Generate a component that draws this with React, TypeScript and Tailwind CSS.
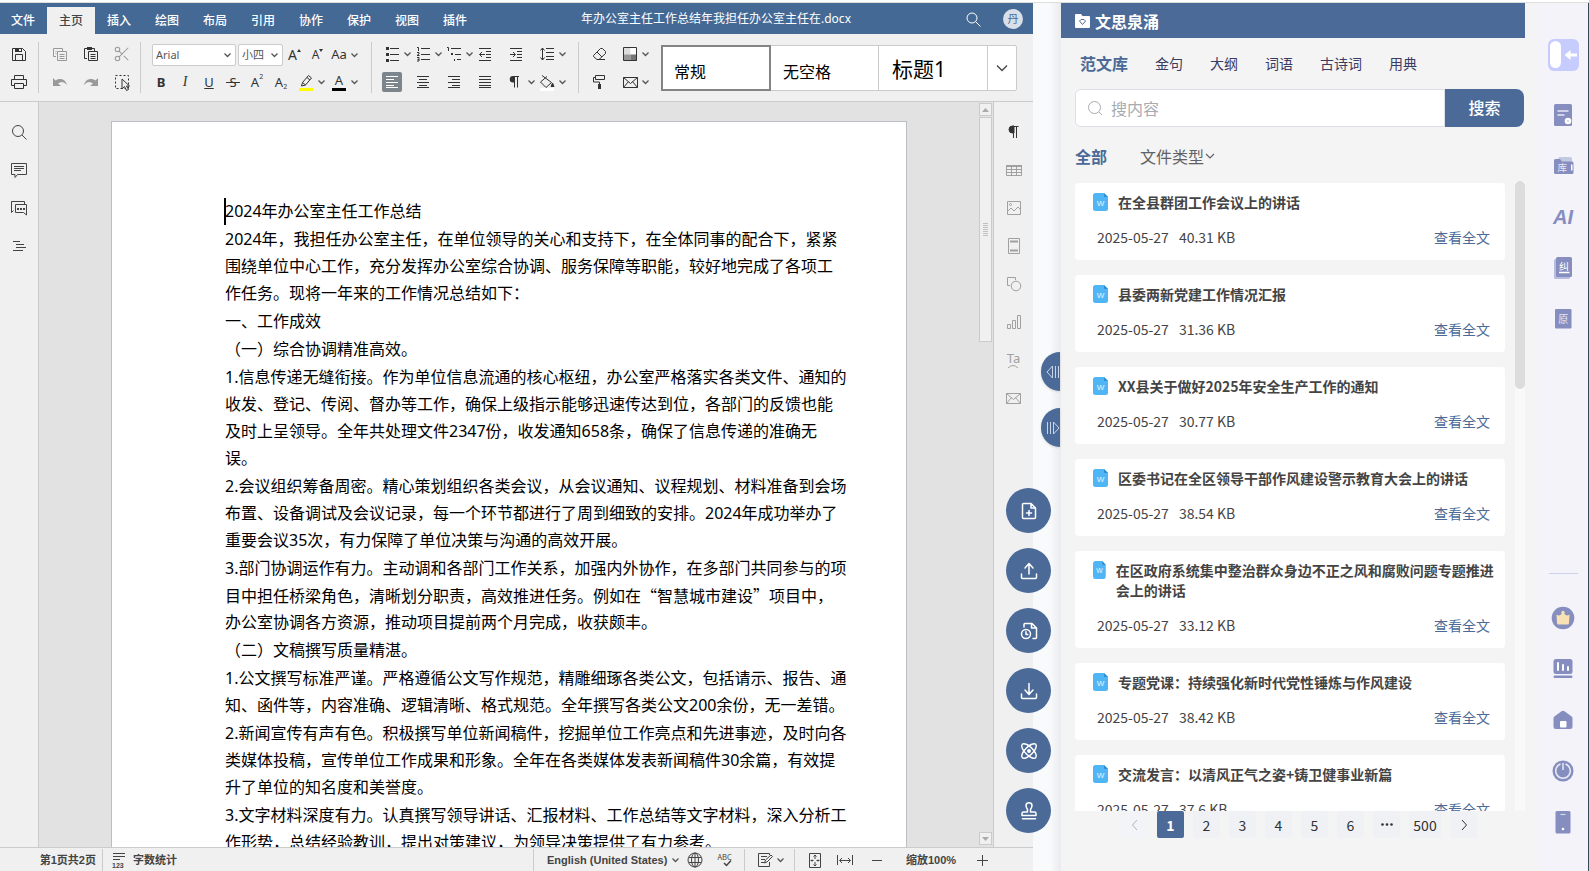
import React from "react";
import { Scissors } from "lucide-react";

type Kids = { children: React.ReactNode };

/* ---------- primitives ---------- */

function Ico({ children, s = 20, className = "" }: Kids & { s?: number; className?: string }) {
  return (
    <svg
      width={s}
      height={s}
      viewBox={`0 0 ${s} ${s}`}
      fill="none"
      stroke="currentColor"
      strokeWidth="1"
      className={`shrink-0 ${className}`}
      aria-hidden="true"
    >
      {children}
    </svg>
  );
}

function Chev({ className = "" }: { className?: string }) {
  return (
    <svg width="11" height="20" viewBox="0 0 11 20" fill="none" stroke="#555" strokeWidth="1.3" className={`shrink-0 ${className}`} aria-hidden="true">
      <path d="M2.5 8.5l3 3 3-3" />
    </svg>
  );
}

function Tool({
  label,
  w = "w-[31px]",
  menu = false,
  dim = false,
  active = false,
  children,
}: Kids & { label: string; w?: string; menu?: boolean; dim?: boolean; active?: boolean }) {
  return (
    <button type="button" aria-label={label} className={`flex h-5 items-center leading-none ${w} ${menu || active ? "justify-start" : "justify-center"} ${dim ? "text-[#999]" : "text-[#333]"}`}>
      {active ? <span className="flex size-5 items-center justify-center rounded-xs bg-[#7d858c] text-white">{children}</span> : children}
      {menu && <Chev />}
    </button>
  );
}

const Sep = () => <span className="h-[51px] w-px shrink-0 self-center bg-[#cbcbcb]" />;

const glyph = "font-['Noto_Sans','Noto_Sans_CJK_SC',sans-serif]";

function Lines({ rows }: { rows: [number, number, number][] }) {
  return (
    <Ico>
      {rows.map(([y, a, b]) => (
        <path key={y} d={`M${a} ${y + 0.5}H${b}`} />
      ))}
    </Ico>
  );
}

/* ---------- editor: header ---------- */

const menuTabs = ["文件", "主页", "插入", "绘图", "布局", "引用", "协作", "保护", "视图", "插件"];

function EditorHeader() {
  return (
    <header className="flex h-[31px] shrink-0 items-center bg-[#446995] pr-[10px] text-xs text-white">
      <nav className="flex h-full items-end">
        {menuTabs.map((t) => (
          <button
            key={t}
            type="button"
            className={`h-[27px] w-12 pb-[2px] font-medium ${t === "主页" ? "bg-[#f0f0f0] text-[#444]" : "text-white"} ${t === "文件" ? "-ml-px" : ""}`}
          >
            {t}
          </button>
        ))}
      </nav>
      <h1 className={`flex-1 pr-3 text-center ${glyph}`}>年办公室主任工作总结年我担任办公室主任在.docx</h1>
      <button type="button" aria-label="搜索" className="mr-[22px] text-white">
        <Ico s={16}>
          <circle cx="7" cy="7" r="5" />
          <path d="M10.5 10.5l5 5" />
        </Ico>
      </button>
      <button type="button" className="flex size-5 items-center justify-center rounded-full bg-[#d9dfe9] text-[11px] text-[#446995]">丹</button>
    </header>
  );
}

/* ---------- editor: ribbon ---------- */

function Combo({ label, options, w }: { label: string; options: string[]; w: string }) {
  return (
    <label className={`relative flex h-[22px] items-center rounded-xs border border-[#cbcbcb] bg-white ${w}`}>
      <span className="sr-only">{label}</span>
      <select className={`h-full w-full appearance-none bg-transparent pl-[3px] text-[11px] leading-4 text-[#555] outline-none ${glyph}`}>
        {options.map((o) => (
          <option key={o}>{o}</option>
        ))}
      </select>
      <Chev className="pointer-events-none absolute right-[2px]" />
    </label>
  );
}

function Ribbon() {
  return (
    <div className="flex h-[68px] shrink-0 border-b border-[#cbcbcb] bg-[#f0f0f0]">
      <div className="flex w-[38px] shrink-0 flex-col items-center gap-2 pt-[10px]">
        <Tool label="保存">
          <Ico>
            <path d="M3.5 4.5h10l3 3v9h-13z" />
            <path d="M6.5 16.5v-6h7v6" />
            <path d="M6 4h7v4H6z" fill="currentColor" stroke="none" />
            <path d="M10 5h2v2h-2z" fill="#f0f0f0" stroke="none" />
          </Ico>
        </Tool>
        <Tool label="打印">
          <Ico>
            <path d="M5.5 7.5v-4h9v4M5.5 13.5h-3v-6h15v6h-3M5.5 11.5h9v5h-9z" />
          </Ico>
        </Tool>
      </div>
      <Sep />
      <div className="grid shrink-0 grid-cols-[31px_31px_31px] content-start gap-y-2 pt-[10px] pr-[3px] pl-[5px]">
        <Tool label="复制" dim>
          <Ico>
            <path d="M6 12.500H3.500V4.500h9V7M7.500 7.500h9v9h-9zM9.500 10.500h5M9.500 12.500h5M9.500 14.500h5M5.500 7.500h1M5.500 9.500h1" />
          </Ico>
        </Tool>
        <Tool label="粘贴">
          <Ico>
            <path d="M6 14.500H3.500V4.500h10V7M7.500 7.500h9v9h-9zM9.500 10.500h5M9.500 12.500h5M9.500 14.500h5" />
            <path d="M6 3h5v3H6z" fill="currentColor" stroke="none" />
          </Ico>
        </Tool>
        <Tool label="剪切" dim>
          <Scissors size={18} strokeWidth={1.4} />
        </Tool>
        <Tool label="撤销" dim>
          <Ico>
            <path d="M3 6v8h8L8 11.500c3-2.500 6-2 9 1.500-1.500-5.500-6.500-7.500-11.500-4.500z" fill="currentColor" stroke="none" />
          </Ico>
        </Tool>
        <Tool label="重做" dim>
          <Ico>
            <path d="M17 6v8H9l3-2.500c-3-2.500-6-2-9 1.500 1.500-5.500 6.500-7.500 11.500-4.500z" fill="currentColor" stroke="none" />
          </Ico>
        </Tool>
        <Tool label="全选">
          <Ico>
            <path d="M3.500 3.500h13v13h-13z" strokeDasharray="2 2" />
            <path d="M10 7v10l2.500-2.500 2 4 2-1-2-3.500h3z" fill="#f0f0f0" />
          </Ico>
        </Tool>
      </div>
      <Sep />
      <div className="flex shrink-0 flex-col gap-[7px] pt-[10px] pr-[11px] pl-2">
        <div className="flex h-[21px] items-center pl-[3px]">
          <Combo label="字体" options={["Arial", "Calibri", "Times New Roman"]} w="w-[84px]" />
          <span className="w-[2px]" />
          <Combo label="字号" options={["小四", "四号", "五号"]} w="w-[45px]" />
          <Tool label="增大字号" w="w-[23px]">
            <span className={`text-sm leading-none ${glyph}`}>A</span>
            <svg width="4" height="12" viewBox="0 0 4 12" fill="currentColor" aria-hidden="true"><path d="M0 3l2-3 2 3z" /></svg>
          </Tool>
          <Tool label="减小字号" w="w-[23px]">
            <span className={`text-xs leading-none ${glyph}`}>A</span>
            <svg width="4" height="12" viewBox="0 0 4 12" fill="currentColor" aria-hidden="true"><path d="M0 0l2 3 2-3z" /></svg>
          </Tool>
          <Tool label="更改大小写" w="w-[31px]" menu>
            <span className={`w-5 text-center text-[13px] leading-none ${glyph}`}>Aa</span>
          </Tool>
        </div>
        <div className={`flex h-5 items-center text-[13px] leading-none ${glyph}`}>
          <Tool label="加粗" w="w-6"><b>B</b></Tool>
          <Tool label="倾斜" w="w-6"><i className="font-['Liberation_Serif',serif] text-sm leading-none">I</i></Tool>
          <Tool label="下划线" w="w-6"><u>U</u></Tool>
          <Tool label="删除线" w="w-6"><s>&nbsp;S&nbsp;</s></Tool>
          <Tool label="上标" w="w-6"><span>A</span><span className="self-start text-[7px] leading-[10px]">2</span></Tool>
          <Tool label="下标" w="w-6"><span>A</span><span className="self-end text-[7px] leading-[10px]">2</span></Tool>
          <Tool label="突出显示颜色" w="w-[33px]" menu>
            <Ico className="ml-[3px]">
              <path d="M6.500 10.500l6-7 3 2.500-6 7-4 1zM6.500 10.500l3 2.500M11 5.500l3 2.500" />
              <path d="M3 16h14v3H3z" fill="#ff0" stroke="none" />
            </Ico>
          </Tool>
          <Tool label="字体颜色" w="w-[33px]" menu>
            <span className="ml-[3px] flex h-5 w-5 shrink-0 flex-col items-center justify-end pb-px leading-[15px]">
              A
              <span className="h-[3px] w-[14px] bg-black" />
            </span>
          </Tool>
        </div>
      </div>
      <Sep />
      <div className="grid shrink-0 grid-cols-[31px_31px_31px_31px_31px_31px] content-start gap-y-2 px-[10px] pt-[10px]">
        <Tool label="项目符号" menu>
          <Ico>
            <path d="M8 4.500h9M8 10.500h9M8 16.500h9" />
            <path d="M4 3h3v3H4zM4 9h3v3H4zM4 15h3v3H4z" fill="currentColor" stroke="none" />
          </Ico>
        </Tool>
        <Tool label="编号" menu>
          <Ico>
            <path d="M8 4.500h9M8 10.500h9M8 15.500h9M4 3.500h1.500V7M4 8.500h2v1.500l-2 1.500h2.500M4 13.500h2v3.500H4M4.500 15.500h1.500" />
          </Ico>
        </Tool>
        <Tool label="多级列表" menu>
          <Ico>
            <path d="M7 4.500h10M11 10.500h6M13 15.500h4M3 3.500h1.500V7" />
            <path d="M7 9h2v2H7zM10 15h1v2h-1z" fill="currentColor" stroke="none" />
          </Ico>
        </Tool>
        <Tool label="减少缩进" w="w-5">
          <Ico>
            <path d="M4 4.500h12M11 7.500h5M11 10.500h5M11 13.500h5M4 16.500h12M4.500 10.500H10M7 8l-2.500 2.500L7 13" />
          </Ico>
        </Tool>
        <Tool label="增加缩进" w="w-5">
          <Ico>
            <path d="M4 4.500h12M11 7.500h5M11 10.500h5M11 13.500h5M4 16.500h12M4 10.500h5M7 8l2.500 2.500L7 13" />
          </Ico>
        </Tool>
        <Tool label="行距" menu>
          <Ico>
            <path d="M9 4.500h8M9 8.500h8M9 12.500h8M9 15.500h8M5.500 4v12M3.500 6.500l2-2.500 2 2.500M3.500 13.500l2 2.500 2-2.500" />
          </Ico>
        </Tool>
        <Tool label="左对齐" active>
          <Lines rows={[[4, 4, 16], [7, 4, 12], [10, 4, 16], [13, 4, 12], [15, 4, 16]]} />
        </Tool>
        <Tool label="居中" w="w-5">
          <Lines rows={[[4, 4, 16], [7, 6, 14], [10, 4, 16], [13, 6, 14], [15, 4, 16]]} />
        </Tool>
        <Tool label="右对齐" w="w-5">
          <Lines rows={[[4, 4, 16], [7, 8, 16], [10, 4, 16], [13, 8, 16], [15, 4, 16]]} />
        </Tool>
        <Tool label="两端对齐" w="w-5">
          <Lines rows={[[4, 4, 16], [7, 4, 16], [10, 4, 16], [13, 4, 16], [15, 4, 16]]} />
        </Tool>
        <Tool label="段落标记" menu>
          <Ico>
            <path d="M9 4H7a3 3 0 000 6.500h2z" fill="currentColor" stroke="none" />
            <path d="M8.500 4v11.500M11.500 4.500v11M7 4.500h6" />
          </Ico>
        </Tool>
        <Tool label="底纹" menu>
          <Ico>
            <path d="M5 3.500l9.500 7L9 15.500 3.500 10 10 4.500M14 11" />
            <path d="M15.500 11l1.500 3.500h-3z" fill="currentColor" />
            <path d="M3 16h14v3H3z" fill="#fff" stroke="none" />
          </Ico>
        </Tool>
      </div>
      <Sep />
      <div className="grid shrink-0 grid-cols-[31px_31px] content-start gap-y-2 px-[10px] pt-[10px]">
        <Tool label="清除样式" w="w-5">
          <Ico>
            <path d="M4.500 11.500l7-7h2l3 3v2l-6.500 6H8l-3.500-3zM8 8l5 5M8 15.500h8" />
          </Ico>
        </Tool>
        <Tool label="配色方案" menu>
          <Ico>
            <path d="M4 4h6.500v6.500H4z" fill="#ddd" stroke="none" />
            <path d="M10.500 4H17v6.500h-6.500z" fill="#fff" stroke="none" />
            <path d="M4 10.500h6.500V17H4z" fill="#999" stroke="none" />
            <path d="M10.500 10.500H17V17h-6.500z" fill="#777" stroke="none" />
            <path d="M3.500 3.500h13v13h-13z" />
          </Ico>
        </Tool>
        <Tool label="格式刷" w="w-5">
          <Ico>
            <path d="M6.500 3.500h9v4h-9zM6.500 5.500h-2v4.500h6v2" />
            <path d="M9 12h3v5H9z" fill="currentColor" stroke="none" />
          </Ico>
        </Tool>
        <Tool label="邮件合并" menu>
          <Ico>
            <path d="M3.500 5.500h14v10h-14zM3.500 5.500l7 6 7-6M3.500 15.500l5-6M17.500 15.500l-5-6" />
          </Ico>
        </Tool>
      </div>
      <div className={`mt-[11px] mr-4 flex h-[46px] min-w-0 flex-1 rounded-xs border border-[#cbcbcb] bg-white text-black ${glyph}`}>
        <button type="button" className="-m-px flex-1 border-2 border-[#848484] pt-2 pl-[11px] text-left text-base">常规</button>
        <button type="button" className="flex-1 border-r border-[#cbcbcb] pt-2 pl-[13px] text-left text-base">无空格</button>
        <button type="button" className="flex-1 border-r border-[#cbcbcb] pt-1 pl-[13px] text-left text-[21px]">标题1</button>
        <button type="button" aria-label="更多样式" className="flex w-7 items-center justify-center text-[#444]">
          <Ico s={14}><path d="M2 4.500l5 5 5-5" strokeWidth="1.3" /></Ico>
        </button>
      </div>
    </div>
  );
}

/* ---------- editor: side bars ---------- */

function SideButton({ label, children }: Kids & { label: string }) {
  return (
    <button type="button" aria-label={label} className="flex h-[38px] w-full items-center justify-center">
      {children}
    </button>
  );
}

function LeftBar() {
  return (
    <aside className="w-[39px] shrink-0 border-r border-[#cbcbcb] bg-[#f0f0f0] pt-[11px] text-[#444]">
      <SideButton label="查找">
        <Ico><circle cx="9" cy="9" r="5.500" /><path d="M13 13l4.500 4.500" /></Ico>
      </SideButton>
      <SideButton label="批注">
        <Ico><path d="M2.500 3.500h15v11h-9l-2.500 3v-3H2.500zM5 6.500h10M5 8.500h10M5 10.500h7" /></Ico>
      </SideButton>
      <SideButton label="聊天">
        <Ico>
          <path d="M4.500 12.500l-2 2v-11h13v3M6.500 6.500h11v10.500l-3-2.500h-8z" />
          <path d="M8 10h2v2H8zM11 10h2v2h-2zM14 10h2v2h-2z" fill="currentColor" stroke="none" />
        </Ico>
      </SideButton>
      <SideButton label="标题导航">
        <Ico><path d="M4 5.500h7M7 8.500h8M7 11.500h10M4 14.500h10" /></Ico>
      </SideButton>
    </aside>
  );
}

function RightBar() {
  return (
    <aside className="w-10 shrink-0 border-l border-[#cbcbcb] bg-[#f0f0f0] pt-[11px] text-[#a0a0a0]">
      <SideButton label="段落设置">
        <Ico className="text-[#333]">
          <path d="M10 4H8.500a3.300 3.300 0 000 7H10z" fill="currentColor" stroke="currentColor" />
          <path d="M9.500 4v12M12.500 4v12M8 4.500h6.500" />
        </Ico>
      </SideButton>
      <SideButton label="表格设置">
        <Ico><path d="M2.500 5.500h15v10h-15zM2.500 9.500h15M2.500 12.500h15M7.500 6v9M12.500 6v9" /><path d="M2 5h16v2H2z" fill="currentColor" stroke="none" /></Ico>
      </SideButton>
      <SideButton label="图片设置">
        <Ico><path d="M3.500 3.500h13v13h-13zM4 13l3-3 3 3 4-4 2.500 2.500" /><circle cx="6.500" cy="6.500" r="1" /></Ico>
      </SideButton>
      <SideButton label="页眉页脚">
        <Ico><path d="M4.500 2.500h11v15h-11z" /><path d="M6 5.500h8M6 14.500h8" strokeWidth="2" /></Ico>
      </SideButton>
      <SideButton label="形状设置">
        <Ico><path d="M6 11.500H3.500v-8h8V6" /><circle cx="12" cy="12" r="4.800" /></Ico>
      </SideButton>
      <SideButton label="图表设置">
        <Ico><path d="M3.500 12.500h3v4h-3zM8.500 8.500h3v8h-3zM13.500 3.500h3v13h-3z" /></Ico>
      </SideButton>
      <SideButton label="艺术字设置">
        <span className={`flex flex-col items-center text-[13px] leading-3 ${glyph}`}>
          Ta
          <svg width="12" height="5" viewBox="0 0 12 5" fill="none" stroke="currentColor" aria-hidden="true"><path d="M1 4q5-5 10 0" /></svg>
        </span>
      </SideButton>
      <SideButton label="邮件合并设置">
        <Ico><path d="M2.500 5.500h14v10h-14zM2.500 5.500l7 6 7-6M2.500 15.500l5-6M16.500 15.500l-5-6" /></Ico>
      </SideButton>
    </aside>
  );
}

/* ---------- editor: document ---------- */

const paragraphs: string[][] = [
  ["2024年办公室主任工作总结"],
  [
    "2024年，我担任办公室主任，在单位领导的关心和支持下，在全体同事的配合下，紧紧",
    "围绕单位中心工作，充分发挥办公室综合协调、服务保障等职能，较好地完成了各项工",
    "作任务。现将一年来的工作情况总结如下：",
  ],
  ["一、工作成效"],
  ["（一）综合协调精准高效。"],
  [
    "1.信息传递无缝衔接。作为单位信息流通的核心枢纽，办公室严格落实各类文件、通知的",
    "收发、登记、传阅、督办等工作，确保上级指示能够迅速传达到位，各部门的反馈也能",
    "及时上呈领导。全年共处理文件2347份，收发通知658条，确保了信息传递的准确无",
    "误。",
  ],
  [
    "2.会议组织筹备周密。精心策划组织各类会议，从会议通知、议程规划、材料准备到会场",
    "布置、设备调试及会议记录，每一个环节都进行了周到细致的安排。2024年成功举办了",
    "重要会议35次，有力保障了单位决策与沟通的高效开展。",
  ],
  [
    "3.部门协调运作有力。主动调和各部门工作关系，加强内外协作，在多部门共同参与的项",
    "目中担任桥梁角色，清晰划分职责，高效推进任务。例如在“智慧城市建设”项目中，",
    "办公室协调各方资源，推动项目提前两个月完成，收获颇丰。",
  ],
  ["（二）文稿撰写质量精湛。"],
  [
    "1.公文撰写标准严谨。严格遵循公文写作规范，精雕细琢各类公文，包括请示、报告、通",
    "知、函件等，内容准确、逻辑清晰、格式规范。全年撰写各类公文200余份，无一差错。",
  ],
  [
    "2.新闻宣传有声有色。积极撰写单位新闻稿件，挖掘单位工作亮点和先进事迹，及时向各",
    "类媒体投稿，宣传单位工作成果和形象。全年在各类媒体发表新闻稿件30余篇，有效提",
    "升了单位的知名度和美誉度。",
  ],
  [
    "3.文字材料深度有力。认真撰写领导讲话、汇报材料、工作总结等文字材料，深入分析工",
    "作形势，总结经验教训，提出对策建议，为领导决策提供了有力参考。",
  ],
];

/* Curly quotes take their full-width form, as in Chinese typesetting. */
const lineFont = (line: string) => (line.includes("“") ? "font-['Noto_Sans_CJK_SC',sans-serif]" : "");

function Document() {
  return (
    <div className="flex min-w-0 flex-1 bg-[#e2e2e2]">
      <div className="min-w-0 flex-1 overflow-hidden pt-[19px]">
        <article lang="zh-CN" className={`relative mx-auto flex min-h-full w-[796px] flex-col gap-px border border-[#bbbec2] bg-white pt-[76px] pl-[113px] text-base leading-[27px] text-black ${glyph}`}>
          <span className="absolute top-[76px] left-[112px] h-[27px] w-[2px] bg-black" />
          {paragraphs.map((p) => (
            <p key={p[0]}>
              {p.map((line) => (
                <span key={line} className={`block h-[27px] whitespace-nowrap ${lineFont(line)}`}>{line}</span>
              ))}
            </p>
          ))}
        </article>
      </div>
      <div className="flex w-[14px] shrink-0 flex-col gap-px pt-px pr-px pb-[2px]">
        <button type="button" aria-label="向上滚动" className="flex h-[13px] items-center justify-center border border-[#cbcbcb] bg-[#f0f0f0] text-[#aaa]">
          <svg width="7" height="4" viewBox="0 0 7 4" fill="currentColor" aria-hidden="true"><path d="M0 4l3.500-4L7 4z" /></svg>
        </button>
        <div className="flex h-[225px] flex-col items-center justify-center gap-px border border-[#cbcbcb] bg-[#f0f0f0]">
          {[0, 1, 2, 3, 4, 5, 6].map((i) => (
            <span key={i} className="h-px w-[5px] bg-[#c0c0c0]" />
          ))}
        </div>
        <button type="button" aria-label="向下滚动" className="mt-auto flex h-[13px] items-center justify-center border border-[#cbcbcb] bg-[#f0f0f0] text-[#aaa]">
          <svg width="7" height="4" viewBox="0 0 7 4" fill="currentColor" aria-hidden="true"><path d="M0 0l3.500 4L7 0z" /></svg>
        </button>
      </div>
    </div>
  );
}

function StatusBar() {
  const text = "text-[11px] font-bold text-[#444] font-['Liberation_Sans','Noto_Sans_CJK_SC',sans-serif]";
  return (
    <footer className="flex h-6 shrink-0 items-stretch border-t border-[#cbcbcb] bg-[#f0f0f0] pt-px text-[#444]">
      <span className={`flex w-[103px] items-center justify-end border-r border-[#cbcbcb] pr-[6px] ${text}`}>第1页共2页</span>
      <button type="button" className={`flex items-center gap-1 pl-[6px] ${text}`}>
        <Ico>
          <path d="M4 3.500h12M4 6.500h12M4 9.500h7" />
          <text x="3" y="18" fontSize="7" fill="currentColor" stroke="none">123</text>
        </Ico>
        字数统计
      </button>
      <div className="ml-auto flex items-stretch border-l border-[#cbcbcb]">
        <button type="button" className={`flex w-[146px] items-center gap-[3px] pl-[13px] whitespace-nowrap ${text}`}>
          English (United States)
          <Chev />
        </button>
        <button type="button" aria-label="文档语言" className="flex w-[30px] items-center justify-center">
          <Ico><circle cx="10" cy="10" r="7" /><ellipse cx="10" cy="10" rx="3.500" ry="7" /><path d="M10 3v14M4 7.500h12M4 12.500h12" /></Ico>
        </button>
        <button type="button" aria-label="拼写检查" className="flex w-[35px] items-center justify-center border-r border-[#cbcbcb] pr-1">
          <Ico>
            <text x="2.500" y="10" fontSize="7.500" fill="currentColor" stroke="none">ABC</text>
            <path d="M9 13l2.500 2.500 4.500-5" strokeWidth="1.500" />
          </Ico>
        </button>
        <button type="button" aria-label="跟踪修改" className="flex w-[50px] items-center border-r border-[#cbcbcb] pl-[10px]">
          <Ico><path d="M14.500 5V3.500h-11v13h11V12M6 6.500h6M6 9.500h4M6 12.500h3M9.500 13l1-3L16 5l1.500 1.500-5.500 5.500z" /></Ico>
          <Chev />
        </button>
        <button type="button" aria-label="适合页面" className="flex w-10 items-center justify-center">
          <Ico><path d="M4.500 3.500h11v14h-11z" /><path d="M10 5v4M8.500 6.500L10 5l1.500 1.500M10 16v-4M8.500 14.500L10 16l1.500-1.500M6 10.500h2.500M7 9.500l-1 1 1 1M14 10.500h-2.500M13 9.500l1 1-1 1" /></Ico>
        </button>
        <button type="button" aria-label="适合宽度" className="flex w-5 items-center justify-center">
          <Ico><path d="M2.500 5v10M17.500 5v10M5 10.500h10M7 8l-2.500 2.500L7 13M13 8l2.500 2.500L13 13" /></Ico>
        </button>
        <button type="button" aria-label="缩小" className="flex w-11 items-center justify-center">
          <Ico s={10}><path d="M0 5.500h10" /></Ico>
        </button>
        <span className={`flex w-16 items-center justify-center ${text}`}>缩放100%</span>
        <button type="button" aria-label="放大" className="flex w-[70px] items-center justify-start pl-[14px]">
          <Ico s={11}><path d="M0 5.500h11M5.500 0v11" /></Ico>
        </button>
      </div>
    </footer>
  );
}

/* ---------- floating controls ---------- */

const rounds: { label: string; draw: React.ReactNode }[] = [
  { label: "新建文档", draw: <path d="M11 1.500H3.500a1 1 0 00-1 1v13a1 1 0 001 1h11a1 1 0 001-1V6zM11 1.500V6h4.500M9 8.500v5M6.500 11h5" /> },
  { label: "上传", draw: <path d="M9 12V2M5 6l4-4.500L13 6M1.500 12v3.500a1 1 0 001 1h13a1 1 0 001-1V12" /> },
  { label: "历史版本", draw: <g><path d="M4 5V2.500a1 1 0 011-1h7L16.500 6v9.500a1 1 0 01-1 1H13M11.500 1.500V6h5" /><circle cx="6" cy="12" r="4.500" /><path d="M6 9.800V12.500h1.800" /></g> },
  { label: "下载", draw: <path d="M9 1.500v10M5 8l4 4.500L13 8M1.500 12v3.500a1 1 0 001 1h13a1 1 0 001-1V12" /> },
  { label: "智能写作", draw: <g><ellipse cx="9" cy="9" rx="4" ry="9.500" transform="rotate(45 9 9)" /><ellipse cx="9" cy="9" rx="4" ry="9.500" transform="rotate(-45 9 9)" /><circle cx="9" cy="9" r="1.200" fill="currentColor" /></g> },
  { label: "盖章", draw: <path d="M7.500 10V7.500C6.500 6 6 5 6 3.800a3 3 0 016 0C12 5 11.500 6 10.500 7.500V10h4a1.500 1.500 0 011.500 1.500V13.500H2v-2A1.500 1.500 0 013.500 10zM2.500 16.800h13" /> },
];

function Gutter() {
  return (
    <div className="relative w-7 shrink-0 bg-linear-to-r from-[#f8fafc] from-60% to-[#e9ebee]">
      <button type="button" aria-label="展开面板" className="absolute top-[349px] right-px flex h-[39px] w-[19px] items-center justify-end rounded-l-full bg-[#4b6a97] text-[#c9d5e8] shadow">
        <Ico s={16}><path d="M8.500 2L3 8l5.500 6zM11.500 2v12M14.500 2v12" /></Ico>
      </button>
      <button type="button" aria-label="收起面板" className="absolute top-[405px] right-px flex h-[39px] w-[19px] items-center justify-end rounded-l-full bg-[#4b6a97] text-[#c9d5e8] shadow">
        <Ico s={16}><path d="M9.500 2L15 8l-5.500 6zM3.500 2v12M6.500 2v12" /></Ico>
      </button>
      <div className="absolute top-[485px] right-[10px] z-10 flex flex-col gap-[15px]">
        {rounds.map((r) => (
          <button key={r.label} type="button" aria-label={r.label} className="flex size-[45px] items-center justify-center rounded-full bg-[#4b6a97] text-white">
            <svg width="18" height="18" viewBox="0 0 18 18" fill="none" stroke="currentColor" strokeWidth="1.500" strokeLinecap="round" strokeLinejoin="round" aria-hidden="true">{r.draw}</svg>
          </button>
        ))}
      </div>
    </div>
  );
}

/* ---------- library panel ---------- */

const docs = [
  { title: "在全县群团工作会议上的讲话", size: "40.31 KB" },
  { title: "县委两新党建工作情况汇报", size: "31.36 KB" },
  { title: "XX县关于做好2025年安全生产工作的通知", size: "30.77 KB" },
  { title: "区委书记在全区领导干部作风建设警示教育大会上的讲话", size: "38.54 KB" },
  { title: "在区政府系统集中整治群众身边不正之风和腐败问题专题推进会上的讲话", size: "33.12 KB" },
  { title: "专题党课：持续强化新时代党性锤炼与作风建设", size: "38.42 KB" },
  { title: "交流发言：以清风正气之姿+铸卫健事业新篇", size: "37.6 KB" },
];

function WordIcon() {
  return (
    <svg width="15" height="18" viewBox="0 0 15 18" preserveAspectRatio="none" className="mt-px min-w-3 shrink" aria-hidden="true">
      <path d="M2.500 0H11l4 4v11.500a2.500 2.500 0 01-2.500 2.500h-10A2.500 2.500 0 010 15.500v-13A2.500 2.500 0 012.500 0z" fill="#50b5f5" />
      <path d="M11 0l4 4h-3a1 1 0 01-1-1z" fill="#2a8fd0" />
      <text x="7.500" y="12.500" fontSize="8" textAnchor="middle" fill="#e8f6ff" fontFamily="Liberation Sans">W</text>
    </svg>
  );
}

function Panel() {
  const pageBtn = "flex h-[27px] items-center justify-center rounded-xs";
  return (
    <section className="flex w-[477px] shrink-0 flex-col bg-[#f4f4f4] pr-[13px]">
      <h2 className="flex h-[35px] shrink-0 items-center gap-[5px] bg-[#4b6a97] pl-[14px] text-base font-bold text-white">
        <svg width="15" height="14" viewBox="0 0 15 14" aria-hidden="true">
          <path d="M1 0h5l1.500 2H14a1 1 0 011 1v10a1 1 0 01-1 1H1a1 1 0 01-1-1V1a1 1 0 011-1z" fill="#fff" />
          <path d="M6 5.500h3l1.500 1.500L7.500 10.500 4.500 7z" fill="none" stroke="#4b6a97" />
        </svg>
        文思泉涌
      </h2>
      <nav className="flex h-[51px] shrink-0 items-center gap-[27px] pb-[2px] pl-[19px] text-sm text-[#3b3b63]">
        <a href="#library" className="text-base font-bold text-[#4b6a97]">范文库</a>
        <a href="#sentences">金句</a>
        <a href="#outline">大纲</a>
        <a href="#words">词语</a>
        <a href="#poems">古诗词</a>
        <a href="#allusions">用典</a>
      </nav>
      <form className="ml-[14px] flex h-[38px] shrink-0 pr-px" onSubmit={(e) => e.preventDefault()}>
        <label className="flex flex-1 items-center rounded-l-md border border-[#dcdfe6] bg-white pl-[11px] text-[#a8abb2]">
          <Ico s={16}><circle cx="7.500" cy="7.500" r="6" /><path d="M12 12l3 3" /></Ico>
          <span className="sr-only">搜索范文</span>
          <input type="text" placeholder="搜内容" className="ml-2 w-full min-w-0 bg-transparent text-base text-[#444] outline-none placeholder:text-[#a8abb2]" />
        </label>
        <button type="submit" className="w-[79px] rounded-r-lg bg-[#4b6a97] pb-[2px] text-base font-medium text-white">搜索</button>
      </form>
      <div className="flex h-[54px] shrink-0 items-center pt-1 pl-[14px] text-base">
        <button type="button" className="font-bold text-[#4b6a97]">全部</button>
        <button type="button" className="ml-[33px] flex items-center text-[#606266]">
          文件类型
          <Ico s={12}><path d="M2 4l4 4 4-4" strokeWidth="1.200" /></Ico>
        </button>
      </div>
      <div className="flex min-h-0 flex-1 pl-[14px]">
        <ul className="flex min-w-0 flex-1 flex-col gap-[15px] overflow-hidden pt-[2px]">
          {docs.map((d) => (
            <li key={d.title} className="shrink-0 rounded bg-white pt-[9px] pr-2 pb-[13px] pl-[18px] text-sm leading-5">
              <div className="flex items-start gap-[10px]">
                <WordIcon />
                <h3 className="font-bold text-[#444]">{d.title}</h3>
              </div>
              <div className="mt-[15px] flex gap-[10px] pr-[7px] pl-1 text-[#444]">
                <span>2025-05-27</span>
                <span>{d.size}</span>
                <a href="#full" className="ml-auto text-[#4b6a97]">查看全文</a>
              </div>
            </li>
          ))}
        </ul>
        <div className="ml-[10px] w-[10px] bg-[#f9f9f9]">
          <div className="h-[208px] rounded-full bg-[#dcdcdc]" />
        </div>
      </div>
      <nav aria-label="分页" className="flex h-[60px] shrink-0 gap-[9px] pl-[60px] text-sm text-[#303133]">
        <button type="button" aria-label="上一页" className={`${pageBtn} w-[27px] bg-[#f3f4f8] text-[#b0b3b9]`}><Ico s={12}><path d="M8 1L3.500 6 8 11" /></Ico></button>
        <button type="button" className={`${pageBtn} w-[27px] bg-[#4b6a97] font-bold text-white`}>1</button>
        {["2", "3", "4", "5", "6"].map((n) => (
          <button key={n} type="button" className={`${pageBtn} w-[27px] bg-[#f0f1f5]`}>{n}</button>
        ))}
        <button type="button" aria-label="更多页" className={`${pageBtn} w-[27px] bg-[#f0f1f5]`}>
          <svg width="12" height="3" viewBox="0 0 12 3" fill="currentColor" aria-hidden="true"><circle cx="1.500" cy="1.500" r="1.300" /><circle cx="6" cy="1.500" r="1.300" /><circle cx="10.500" cy="1.500" r="1.300" /></svg>
        </button>
        <button type="button" className={`${pageBtn} w-8 bg-[#f0f1f5]`}>500</button>
        <button type="button" aria-label="下一页" className={`${pageBtn} w-[27px] bg-[#f0f1f5]`}><Ico s={12}><path d="M4 1l4.500 5L4 11" /></Ico></button>
      </nav>
    </section>
  );
}

/* ---------- tool rail ---------- */

function RailButton({ label, children }: Kids & { label: string }) {
  return (
    <button type="button" aria-label={label} className="flex h-[51px] w-full items-center justify-center">
      <svg width="24" height="24" viewBox="0 0 24 24" fill="#868dbf" fontFamily="Noto Sans CJK SC" aria-hidden="true">{children}</svg>
    </button>
  );
}

function Rail() {
  return (
    <aside className="flex w-[51px] shrink-0 flex-col items-center border-r border-[#34495a] bg-[#f4f3fa] pt-9 pb-6">
      <button type="button" aria-label="收起" className="mb-[18px] shrink-0">
        <svg width="31" height="32" viewBox="0 0 31 32" aria-hidden="true">
          <rect width="31" height="32" rx="6" fill="#c6ccfd" />
          <rect x="2" y="2" width="11" height="27" rx="5.500" fill="#fff" />
          <path d="M16.500 16l6-5v3.500H29v3h-6.500V21z" fill="#fff" />
        </svg>
      </button>
      <RailButton label="文稿">
        <rect x="3" y="1" width="18" height="22" rx="1.500" />
        <path d="M6.500 8h11M6.500 12h7" stroke="#e6e8f5" strokeWidth="1.300" />
        <circle cx="17" cy="18" r="3.300" fill="#fff" />
        <circle cx="17" cy="18" r="1" fill="#c4c8e6" />
      </RailButton>
      <RailButton label="素材库">
        <path d="M8 3h11.500A1.500 1.500 0 0121 4.500V8H6z" fill="#c4c8e3" />
        <path d="M3 6.500A1.500 1.500 0 014.500 5H9l2 2.500h10a1.500 1.500 0 011.500 1.500v9.500A1.500 1.500 0 0121 20H4.500A1.500 1.500 0 013 18.500z" />
        <text x="6.500" y="17" fontSize="9.500" fill="#e6e8f5">库</text>
        <path d="M20 10.500h1.500v6H20z" fill="#fff" />
      </RailButton>
      <RailButton label="AI">
        <text x="12" y="19" fontSize="20" fontWeight="700" fontStyle="italic" textAnchor="middle" fontFamily="Liberation Sans">AI</text>
      </RailButton>
      <RailButton label="纠错">
        <rect x="3" y="3" width="16" height="20" rx="1.500" fill="#b7bce0" />
        <rect x="5" y="1" width="16" height="20" rx="1.500" />
        <text x="13" y="13.500" fontSize="10" fill="#fff" textAnchor="middle">纠</text>
        <path d="M8 16.500h10.500" stroke="#fff" strokeWidth="1.500" />
      </RailButton>
      <RailButton label="原创检测">
        <rect x="4" y="2" width="16.500" height="19.500" rx="1" />
        <text x="12.200" y="15.500" fontSize="10" fill="#e6e8f5" textAnchor="middle">原</text>
      </RailButton>
      <span className="mt-auto mb-[18px] h-px w-[29px] shrink-0 bg-[#ccd1ea]" />
      <RailButton label="会员">
        <circle cx="12" cy="12" r="11.300" />
        <path d="M5.500 8.500q3 2 5-.5l.8-2h1.400l.8 2q2 2.500 5 .5L18 17q0 1.500-1.500 1.500h-9Q6 18.500 6 17z" fill="#f8e2b4" />
        <circle cx="12" cy="6.500" r="1.700" fill="#f8e2b4" />
      </RailButton>
      <RailButton label="统计">
        <rect x="2.500" y="2" width="19" height="15" rx="2.500" />
        <rect x="2.500" y="18.500" width="19" height="2.500" rx="1.200" />
        <path d="M7 6v7M12 8v5M17 10v3" stroke="#fff" strokeWidth="2" strokeLinecap="round" />
      </RailButton>
      <RailButton label="首页">
        <path d="M10.500 3.300a2.500 2.500 0 013 0l6.800 4.900a2.500 2.500 0 011.200 2V18.500a2.500 2.500 0 01-2.500 2.500H5a2.500 2.500 0 01-2.500-2.500v-8.300a2.500 2.500 0 011.200-2z" />
        <rect x="9" y="13" width="6.500" height="6.500" rx="1" fill="#fff" />
      </RailButton>
      <RailButton label="退出">
        <circle cx="12" cy="12" r="10.500" />
        <path d="M9.500 5a7.300 7.300 0 105 0M12 4v7" fill="none" stroke="#e6e8f5" strokeWidth="1.500" />
      </RailButton>
      <RailButton label="手机版">
        <rect x="4.500" y="1" width="15" height="22.500" rx="1.500" />
        <path d="M9.500 4.500h5" stroke="#d4d7ee" strokeWidth="1.200" />
        <circle cx="12" cy="19" r="1.300" fill="#fff" />
      </RailButton>
    </aside>
  );
}

export default function App() {
  return (
    <div className="flex h-screen flex-col overflow-hidden bg-white font-['Noto_Sans_CJK_SC',sans-serif]">
      <div className="h-[3px] shrink-0 border-b border-[#dcdedc]" />
      <div className="flex min-h-0 flex-1">
        <main className="flex min-w-0 flex-1 flex-col">
          <EditorHeader />
          <Ribbon />
          <div className="flex min-h-0 flex-1">
            <LeftBar />
            <Document />
            <RightBar />
          </div>
          <StatusBar />
        </main>
        <Gutter />
        <Panel />
        <Rail />
      </div>
    </div>
  );
}
